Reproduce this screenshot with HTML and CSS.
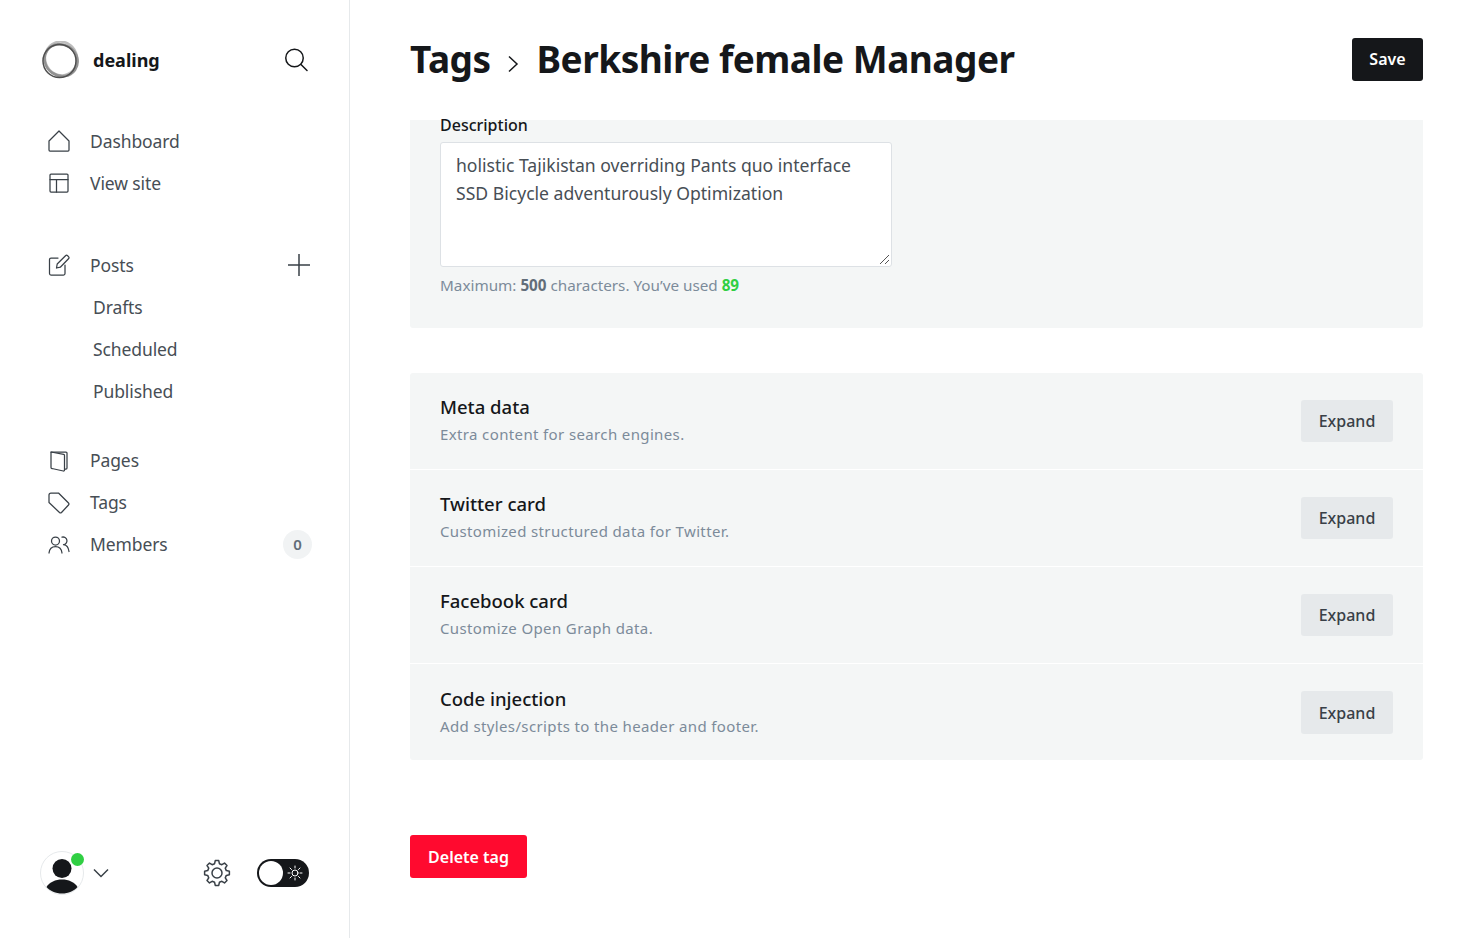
FILE: index.html
```html
<!DOCTYPE html>
<html lang="en">
<head>
    <meta charset="UTF-8">
    <meta name="viewport" content="width=device-width, initial-scale=1.0">
    <title>Tags - Berkshire female Manager</title>
    <link rel="stylesheet" href="styles.css">
</head>
<body>
    <aside class="sidebar">
        <div class="brand">
            <svg class="brand-logo" width="38" height="38" viewBox="0 0 38 38" fill="none">
                <ellipse cx="20.500" cy="18" rx="16" ry="17" stroke="#bdbdbd" stroke-width="2.500" transform="rotate(-20 19 19)"/>
                <ellipse cx="20" cy="18.500" rx="17" ry="15.500" stroke="#929292" stroke-width="2.500" transform="rotate(35 19 19)"/>
                <circle cx="18.500" cy="20" r="16.500" stroke="#4f4f4f" stroke-width="1.500"/>
            </svg>
            <span class="brand-name">dealing</span>
            <svg class="brand-search" width="24" height="24" viewBox="0 0 24 24" fill="none" stroke="#15171a" stroke-width="1.500" stroke-linecap="round">
                <circle cx="10.500" cy="10" r="8.750"/>
                <path d="M17 16.500l6 6"/>
            </svg>
        </div>

        <nav class="nav-group">
            <a class="nav-item">
                <svg class="nav-icon" viewBox="0 0 24 24"><path d="M2 12L12 2l10 10v9a1 1 0 0 1-1 1H3a1 1 0 0 1-1-1z"/></svg>
                <span>Dashboard</span>
            </a>
            <a class="nav-item">
                <svg class="nav-icon" viewBox="0 0 24 24"><rect x="3" y="3" width="18" height="18" rx="1"/><path d="M3 8.500h18M9.500 8.500V21"/></svg>
                <span>View site</span>
            </a>
        </nav>

        <nav class="nav-group nav-group-posts">
            <a class="nav-item">
                <svg class="nav-icon" viewBox="0 0 24 24"><path d="M11 5H4a1.500 1.500 0 0 0-1.500 1.500v14A1.500 1.500 0 0 0 4 22h12.500a1.500 1.500 0 0 0 1.500-1.500V12"/><path d="M9.500 15l.7-4L18.500 2.700a1.500 1.500 0 0 1 2.100 0l.9.9a1.500 1.500 0 0 1 0 2.100L13.300 14.200z"/></svg>
                <span>Posts</span>
                <svg class="nav-add" width="24" height="24" viewBox="0 0 24 24"><path d="M12 1v22M1 12h22"/></svg>
            </a>
            <a class="nav-sub">Drafts</a>
            <a class="nav-sub">Scheduled</a>
            <a class="nav-sub">Published</a>
        </nav>

        <nav class="nav-group">
            <a class="nav-item">
                <svg class="nav-icon" viewBox="0 0 24 24"><path d="M4 4h15a1 1 0 0 1 1 1v15a1 1 0 0 1-1 1h-1"/><path d="M4 4l12.700 2.400a1 1 0 0 1 .8 1V22a1 1 0 0 1-1.200 1L5 20.500a1 1 0 0 1-1-1z"/></svg>
                <span>Pages</span>
            </a>
            <a class="nav-item">
                <svg class="nav-icon" viewBox="0 0 24 24"><path d="M2 5a2 2 0 0 1 2-2h7.500l10 10a1.500 1.500 0 0 1 0 2L14.500 22.500a1.500 1.500 0 0 1-2 0L2 12.500z"/></svg>
                <span>Tags</span>
            </a>
            <a class="nav-item">
                <svg class="nav-icon" viewBox="0 0 24 24"><circle cx="8.500" cy="9" r="4"/><path d="M2 21c.4-4 3-6.500 6.500-6.500S14.600 17 15 21"/><path d="M15 5.200a3.800 3.800 0 1 1 1.500 7.400c3 .3 5 3 5.500 6.900"/></svg>
                <span>Members</span>
                <span class="nav-count">0</span>
            </a>
        </nav>

        <div class="sidebar-footer">
            <div class="avatar">
                <svg width="44" height="44" viewBox="0 0 44 44">
                    <circle cx="22" cy="22" r="21.500" fill="#fff" stroke="#e6e9eb"/>
                    <circle cx="22" cy="17.500" r="9.500" fill="#15171a"/>
                    <path d="M6.500 36C9.500 31 15.500 28.500 22 28.500S34.500 31 37.500 36C34 40 28.500 42.500 22 42.500S10 40 6.500 36z" fill="#15171a"/>
                </svg>
                <span class="avatar-dot"></span>
            </div>
            <svg class="avatar-caret" width="16" height="10" viewBox="0 0 16 10"><path d="M1 1.500l7 7 7-7"/></svg>
            <svg class="settings" width="28" height="28" viewBox="0 0 28 28" fill="none" stroke="#394047" stroke-width="1.500" stroke-linejoin="round">
                <path d="M12.260 1.620L15.740 1.620L16.400 4.700L18.870 5.730L21.520 4.020L23.980 6.480L22.270 9.130L23.300 11.600L26.380 12.260L26.380 15.740L23.300 16.400L22.270 18.870L23.980 21.520L21.520 23.980L18.870 22.270L16.400 23.300L15.740 26.380L12.260 26.380L11.600 23.300L9.130 22.270L6.480 23.980L4.020 21.520L5.730 18.870L4.700 16.400L1.620 15.740L1.620 12.260L4.700 11.600L5.730 9.130L4.020 6.480L6.480 4.020L9.130 5.730L11.600 4.700Z"/>
                <circle cx="14" cy="14" r="5"/>
            </svg>
            <div class="theme-toggle">
                <span class="toggle-knob"></span>
                <svg width="16" height="16" viewBox="0 0 16 16" fill="none" stroke="#fff" stroke-width="1" stroke-linecap="round">
                    <circle cx="8" cy="8" r="3"/>
                    <path d="M8 1v2M8 13v2M1 8h2M13 8h2M3 3l1.500 1.500M11.500 11.500L13 13M3 13l1.500-1.500M11.500 4.500L13 3"/>
                </svg>
            </div>
        </div>
    </aside>

    <main class="main">
        <header class="page-header">
            <h1 class="page-title">
                <span>Tags</span>
                <svg class="crumb" width="12" height="18" viewBox="0 0 12 18"><path d="M2 1.500L10 9l-8 7.500"/></svg>
                <span>Berkshire female Manager</span>
            </h1>
            <button class="btn-save">Save</button>
        </header>

        <section class="panel panel-form">
            <label class="field-label" for="description">Description</label>
            <div class="field-wrap">
                <textarea class="field-input" id="description">holistic Tajikistan overriding Pants quo interface SSD Bicycle adventurously Optimization</textarea>
                <svg class="field-grip" width="11" height="11" viewBox="0 0 11 11"><path d="M1 10l9-9M6 10l4-4"/></svg>
            </div>
            <p class="field-hint">Maximum: <b>500</b> characters. You’ve used <b class="used">89</b></p>
        </section>

        <section class="panel panel-list">
            <div class="expand-row">
                <div>
                    <h4 class="row-title">Meta data</h4>
                    <p class="row-desc">Extra content for search engines.</p>
                </div>
                <button class="btn-expand">Expand</button>
            </div>
            <div class="expand-row">
                <div>
                    <h4 class="row-title">Twitter card</h4>
                    <p class="row-desc">Customized structured data for Twitter.</p>
                </div>
                <button class="btn-expand">Expand</button>
            </div>
            <div class="expand-row">
                <div>
                    <h4 class="row-title">Facebook card</h4>
                    <p class="row-desc">Customize Open Graph data.</p>
                </div>
                <button class="btn-expand">Expand</button>
            </div>
            <div class="expand-row">
                <div>
                    <h4 class="row-title">Code injection</h4>
                    <p class="row-desc">Add styles/scripts to the header and footer.</p>
                </div>
                <button class="btn-expand">Expand</button>
            </div>
        </section>

        <button class="btn-delete">Delete tag</button>
    </main>
</body>
</html>
```

FILE: styles.css
```css
* {
    box-sizing: border-box;
}
html, body {
    height: 100%;
}
body {
    margin: 0;
    display: flex;
    overflow: hidden;
    background: #fff;
    color: #15171a;
    font-family: "Noto Sans", "Open Sans", sans-serif;
}
button {
    font-family: inherit;
    border: none;
    cursor: pointer;
}
p, h1, h4 {
    margin: 0;
}

/* sidebar */
.sidebar {
    width: 350px;
    flex: none;
    height: 938px;
    border-right: 1px solid #e6e9eb;
    padding: 41px 38px 43px 41px;
    display: flex;
    flex-direction: column;
}
.brand {
    display: flex;
    align-items: center;
    height: 38px;
    margin-bottom: 41px;
}
.brand-logo {
    flex: none;
}
.brand-name {
    margin-left: 14px;
    font-size: 18px;
    font-weight: 700;
}
.brand-search {
    margin-left: auto;
    margin-right: 3px;
}
.nav-group {
    margin-bottom: 40px;
}
.nav-group-posts {
    margin-bottom: 27px;
}
.nav-item {
    display: flex;
    align-items: center;
    height: 42px;
    padding-left: 6px;
    color: #474e55;
    font-size: 17.500px;
    letter-spacing: -0.100px;
}
.nav-icon {
    width: 24px;
    height: 24px;
    margin-right: 19px;
    fill: none;
    stroke: #394047;
    stroke-width: 1.250;
    stroke-linejoin: round;
    stroke-linecap: round;
}
.nav-add {
    margin-left: auto;
    fill: none;
    stroke: #394047;
    stroke-width: 1.500;
}
.nav-sub {
    display: flex;
    align-items: center;
    height: 42px;
    padding-left: 52px;
    color: #474e55;
    font-size: 17.500px;
    letter-spacing: -0.100px;
}
.nav-count {
    margin-left: auto;
    margin-right: -1px;
    width: 29px;
    height: 29px;
    border-radius: 50%;
    background: #f1f3f4;
    color: #626d79;
    font-size: 15px;
    font-weight: 600;
    display: flex;
    align-items: center;
    justify-content: center;
}
.sidebar-footer {
    margin-top: auto;
    display: flex;
    align-items: center;
    height: 44px;
    padding-right: 2px;
}
.avatar {
    position: relative;
    width: 44px;
    height: 44px;
    margin-left: -1px;
}
.avatar svg {
    display: block;
}
.avatar-dot {
    position: absolute;
    top: 2px;
    right: 0;
    width: 13px;
    height: 13px;
    border-radius: 50%;
    background: #30cf43;
}
.avatar-caret {
    margin-left: 9px;
    fill: none;
    stroke: #394047;
    stroke-width: 1.500;
}
.settings {
    margin-left: auto;
    margin-right: 26.500px;
}
.theme-toggle {
    width: 52px;
    height: 28px;
    border-radius: 14px;
    background: #15171a;
    display: flex;
    align-items: center;
    justify-content: space-between;
    padding: 0 6px 0 2px;
}
.toggle-knob {
    width: 24px;
    height: 24px;
    border-radius: 50%;
    background: #fff;
}

/* main */
.main {
    flex: 1;
    min-width: 0;
    height: 938px;
    overflow: hidden;
    padding: 0 60px;
}
.page-header {
    height: 120px;
    padding-bottom: 2px;
    display: flex;
    align-items: center;
    justify-content: space-between;
}
.page-title {
    display: flex;
    align-items: center;
    margin-bottom: 2px;
    font-size: 37px;
    font-weight: 700;
    letter-spacing: -0.500px;
}
.crumb {
    margin: 12px 18px 0 16px;
    fill: none;
    stroke: #15171a;
    stroke-width: 1.500;
}
.btn-save {
    width: 71px;
    height: 43px;
    border-radius: 3px;
    background: #15171a;
    color: #fff;
    font-size: 16px;
    font-weight: 600;
}
.panel {
    background: #f4f6f6;
    border-radius: 3px;
}
.panel-form {
    height: 208px;
    padding: 0 30px;
    border-radius: 0 0 3px 3px;
}
.field-label {
    display: block;
    height: 22px;
    font-size: 16px;
    font-weight: 500;
    line-height: 11px;
    color: #15171a;
}
.field-wrap {
    position: relative;
    width: 452px;
}
.field-input {
    display: block;
    width: 452px;
    height: 125px;
    padding: 8px 15px;
    background: #fff;
    border: 1px solid #dde1e5;
    border-radius: 3px;
    color: #474e55;
    font-family: inherit;
    font-size: 17.600px;
    line-height: 28px;
    resize: none;
}
.field-grip {
    position: absolute;
    right: 2px;
    bottom: 2px;
    fill: none;
    stroke: #555;
    stroke-width: 1;
}
.field-hint {
    margin-top: 7px;
    font-size: 15.250px;
    line-height: 22px;
    color: #7c8b9a;
}
.field-hint b {
    color: #626d79;
}
.field-hint .used {
    color: #30cf43;
}
.panel-list {
    margin-top: 45px;
    height: 387px;
}
.expand-row {
    height: 97px;
    padding: 0 30px;
    display: flex;
    align-items: center;
    justify-content: space-between;
    border-bottom: 1px solid #fff;
}
.expand-row:last-child {
    border-bottom: none;
}
.row-title {
    font-size: 18.500px;
    font-weight: 500;
    line-height: 26px;
}
.row-desc {
    font-size: 15px;
    line-height: 28px;
    letter-spacing: 0.370px;
    color: #7c8b9a;
}
.btn-expand {
    width: 92px;
    height: 42.500px;
    border-radius: 3px;
    background: #e6e9eb;
    color: #394047;
    font-size: 16px;
    font-weight: 500;
}
.btn-delete {
    display: block;
    margin-top: 75px;
    width: 117px;
    height: 43px;
    border-radius: 3px;
    background: #ff0a2f;
    color: #fff;
    font-size: 16px;
    font-weight: 600;
}
```
